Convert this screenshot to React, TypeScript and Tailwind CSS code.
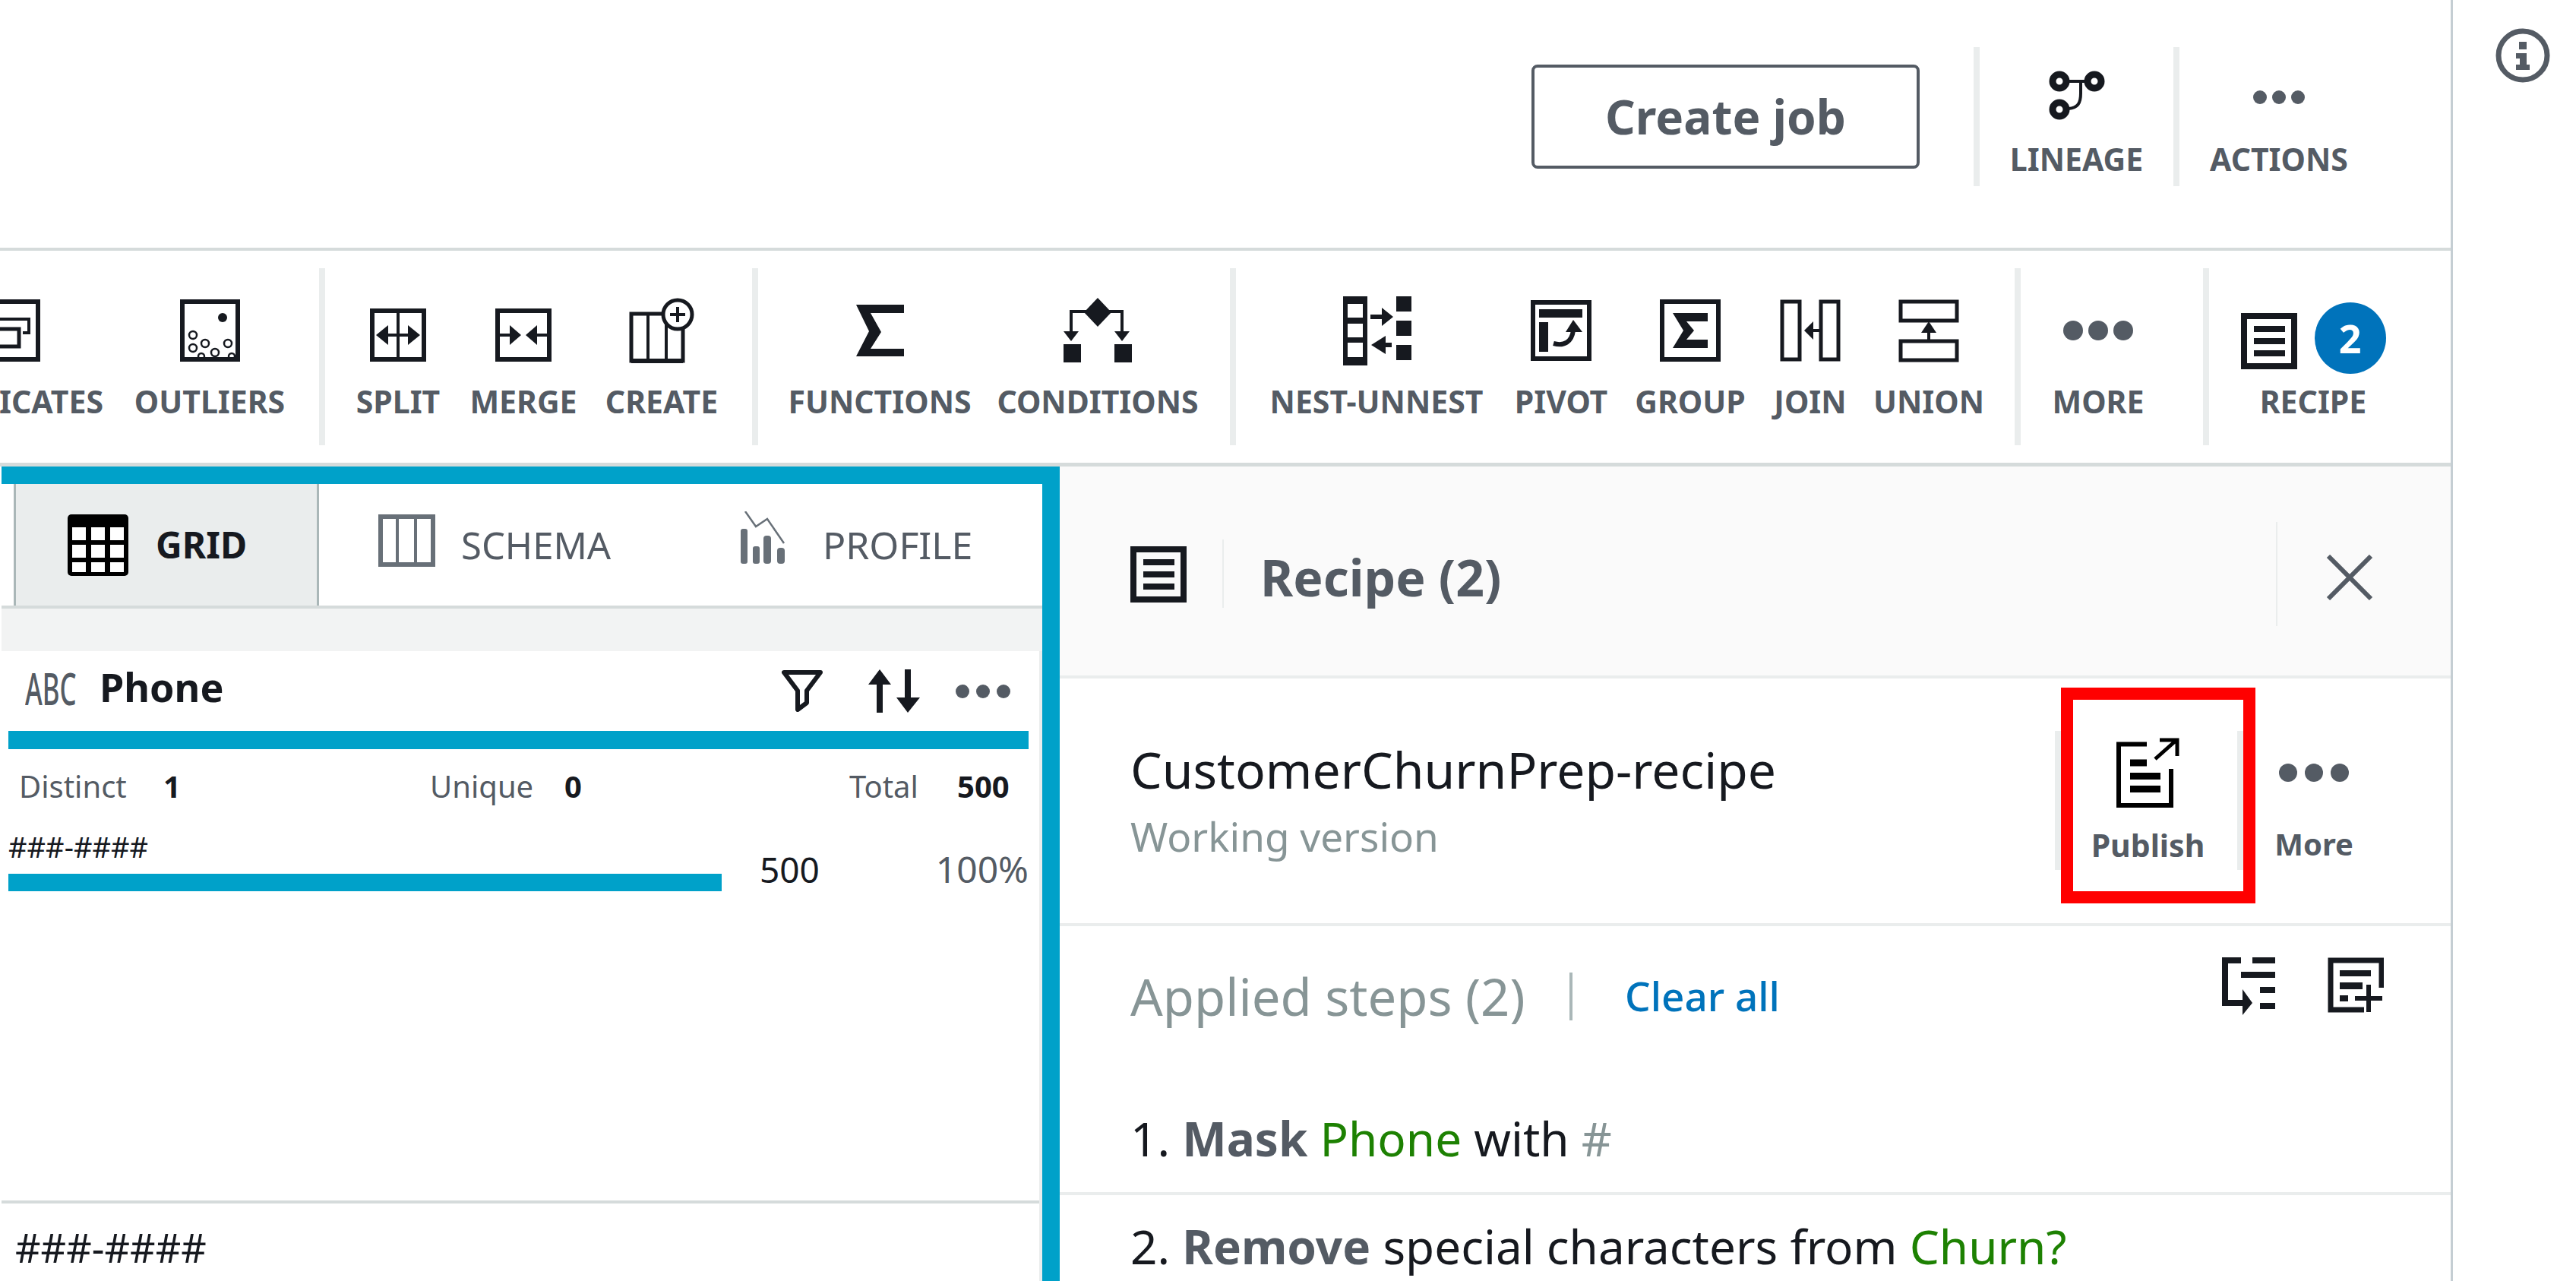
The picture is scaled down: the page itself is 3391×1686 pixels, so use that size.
import type { ReactNode } from "react";

function Dots({ r, gap, fill = "#545b64" }: { r: number; gap: number; fill?: string }) {
  const w = r * 2 + gap * 2;
  return (
    <svg width={w} height={r * 2} viewBox={`0 0 ${w} ${r * 2}`} className="block">
      <circle cx={r} cy={r} r={r} fill={fill} />
      <circle cx={r + gap} cy={r} r={r} fill={fill} />
      <circle cx={r + gap * 2} cy={r} r={r} fill={fill} />
    </svg>
  );
}

function RecipeIcon() {
  return (
    <svg width="74" height="74" viewBox="0 0 74 74" className="block shrink-0" fill="#16191f">
      <path d="M0 0H74V74H0Z M8 8V66H66V8Z" fillRule="evenodd" />
      <rect x="17" y="17" width="41" height="8" />
      <rect x="17" y="33" width="41" height="8" />
      <rect x="17" y="49" width="41" height="8" />
    </svg>
  );
}

function Tool({ label, width, children, dup }: { label: string; width: string; children: ReactNode; dup?: boolean }) {
  return (
    <div className={`${width} flex flex-col ${dup ? "items-start" : "items-center"} shrink-0`}>
      <div className="h-[100px] flex justify-center">{children}</div>
      <div className={`mt-[18px] h-[40px] leading-[40px] text-[41px] font-bold whitespace-nowrap text-[#545b64] ${dup ? "self-end pr-[4px]" : ""}`}>
        {label}
      </div>
    </div>
  );
}

function Sep({ className = "" }: { className?: string }) {
  return <div className={`w-[8px] h-[233px] bg-[#eaeded] shrink-0 ${className}`} />;
}

const INK = "#16191f";

export default function App() {
  return (
    <div className="w-[3391px] h-[1686px] overflow-hidden bg-white flex [font-family:'Noto_Sans',sans-serif] text-[#16191f]">
      <div className="w-[3229px] shrink-0 h-full border-r-[3px] border-[#c5ced3] flex flex-col">
        {/* top bar */}
        <div className="h-[326px] shrink-0 flex justify-end items-start pt-[62px] pr-[95px]">
          <button className="mt-[23px] w-[511px] h-[137px] border-[4px] border-[#545b64] rounded-[8px] text-[62px] font-bold text-[#545b64] bg-white">
            Create job
          </button>
          <div className="w-[8px] h-[183px] bg-[#eaeded] ml-[71px]" />
          <div className="w-[255px] h-[183px] flex flex-col items-center pt-[31px]">
            <svg width="74" height="65" viewBox="0 0 74 65" fill="none" stroke={INK} className="block">
              <circle cx="14" cy="14" r="9" strokeWidth="9" />
              <circle cx="60" cy="14" r="9" strokeWidth="9" />
              <circle cx="14" cy="51" r="9" strokeWidth="9" />
              <path d="M27 14H47" strokeWidth="4" />
              <path d="M42 14V30C42 43 38 49 26 50" strokeWidth="4" />
            </svg>
            <div className="mt-[31px] text-[41px] leading-[40px] font-bold text-[#545b64]">LINEAGE</div>
          </div>
          <div className="w-[8px] h-[183px] bg-[#eaeded]" />
          <div className="w-[262px] h-[183px] flex flex-col items-center pt-[57px]">
            <Dots r={9} gap={25} />
            <div className="mt-[52px] text-[41px] leading-[40px] font-bold text-[#545b64]">ACTIONS</div>
          </div>
        </div>
        <div className="h-[4px] shrink-0 bg-[#d5dbdb]" />

        {/* toolbar */}
        <div className="h-[279px] shrink-0 flex items-start pt-[23px] overflow-hidden">
          <div className="flex items-start">
            <div className="pt-[37px] flex">
              <Tool label="DUPLICATES" width="w-[140px]" dup>
                <svg width="53" height="100" viewBox="0 0 53 100" fill="none" stroke={INK} className="block">
                  <path d="M0 7H50V83H0" strokeWidth="6" />
                  <path d="M0 30H38V48H30" strokeWidth="4" />
                  <path d="M0 43H25V66H0" strokeWidth="5" />
                </svg>
              </Tool>
              <Tool label="OUTLIERS" width="w-[272px]">
                <svg width="79" height="100" viewBox="0 0 79 100" fill="none" stroke={INK} className="block">
                  <rect x="3" y="7" width="73" height="76" strokeWidth="6" />
                  <circle cx="56" cy="28" r="6" fill={INK} stroke="none" />
                  <g strokeWidth="2.5">
                    <circle cx="17" cy="51" r="5" />
                    <circle cx="33" cy="62" r="5" />
                    <circle cx="17" cy="68" r="5" />
                    <circle cx="63" cy="62" r="5" />
                    <circle cx="46" cy="74" r="5" />
                    <circle cx="28" cy="79" r="4" />
                    <circle cx="68" cy="79" r="4" />
                  </g>
                </svg>
              </Tool>
            </div>
            <Sep className="ml-[8px]" />
            <div className="pt-[37px] flex">
              <Tool label="SPLIT" width="w-[192px]">
                <svg width="74" height="100" viewBox="0 0 74 100" fill={INK} stroke="none" className="block">
                  <rect x="3" y="19" width="68" height="64" fill="none" stroke={INK} strokeWidth="6" />
                  <path d="M37 19V83" stroke={INK} strokeWidth="4" />
                  <path d="M8 51L24 38V64Z M66 51L50 38V64Z" />
                  <path d="M24 51H50" stroke={INK} strokeWidth="4" />
                </svg>
              </Tool>
              <Tool label="MERGE" width="w-[138px]">
                <svg width="74" height="100" viewBox="0 0 74 100" fill={INK} stroke="none" className="block">
                  <rect x="3" y="19" width="68" height="64" fill="none" stroke={INK} strokeWidth="6" />
                  <path d="M34 51L19 38V64Z M40 51L55 38V64Z" />
                  <path d="M3 51H20 M54 51H71" stroke={INK} strokeWidth="4" />
                </svg>
              </Tool>
              <Tool label="CREATE" width="w-[226px]">
                <svg width="86" height="100" viewBox="0 0 86 100" fill="none" stroke={INK} className="block">
                  <rect x="3" y="23" width="68" height="62" strokeWidth="5" />
                  <path d="M25 23V85 M49 23V85" strokeWidth="4" />
                  <path d="M3 85H71" strokeWidth="6" />
                  <circle cx="64" cy="24" r="19" fill="white" strokeWidth="5" />
                  <path d="M54 24H74 M64 14V34" strokeWidth="4" />
                </svg>
              </Tool>
            </div>
            <Sep className="ml-[6px]" />
            <div className="pt-[37px] flex">
              <Tool label="FUNCTIONS" width="w-[320px]">
                <svg width="63" height="100" viewBox="0 0 63 100" fill={INK} className="block">
                  <path d="M0 11H63V22H19L33 47L19 69H63V79H0L17 46Z" />
                </svg>
              </Tool>
              <Tool label="CONDITIONS" width="w-[254px]">
                <svg width="90" height="100" viewBox="0 0 90 100" fill={INK} className="block">
                  <path d="M45 2L63 21L45 40L27 21Z" />
                  <path d="M10 48V20H77V48" fill="none" stroke={INK} strokeWidth="4" />
                  <path d="M0 46H20L10 59Z M67 46H87L77 59Z" />
                  <rect x="0" y="63" width="23" height="24" />
                  <rect x="67" y="63" width="23" height="24" />
                </svg>
              </Tool>
            </div>
            <Sep className="ml-[47px]" />
            <div className="pt-[37px] flex">
              <Tool label="NEST-UNNEST" width="w-[370px]">
                <svg width="91" height="100" viewBox="0 0 91 100" fill={INK} className="block">
                  <path d="M1 0H33V91H1Z M7 10V28H27V10Z M7 36V54H27V36Z M7 61V80H27V61Z" fillRule="evenodd" />
                  <rect x="71" y="0" width="20" height="20" />
                  <rect x="71" y="32" width="20" height="20" />
                  <rect x="71" y="64" width="20" height="20" />
                  <path d="M37 24H52V15L67 27L52 39V30H37Z" />
                  <path d="M38 64L57 52V61H65V67H57V76Z" />
                </svg>
              </Tool>
              <Tool label="PIVOT" width="w-[116px]">
                <svg width="80" height="100" viewBox="0 0 80 100" fill={INK} className="block">
                  <rect x="3" y="8" width="74" height="74" fill="none" stroke={INK} strokeWidth="6" />
                  <rect x="11" y="17" width="57" height="11" />
                  <rect x="11" y="34" width="12" height="39" />
                  <path d="M30 62C44 66 54 60 56 45" fill="none" stroke={INK} strokeWidth="6" />
                  <path d="M56 31L68 47H46Z" />
                </svg>
              </Tool>
              <Tool label="GROUP" width="w-[224px]">
                <svg width="80" height="100" viewBox="0 0 80 100" fill={INK} className="block">
                  <rect x="3" y="7" width="74" height="76" fill="none" stroke={INK} strokeWidth="6" />
                  <path d="M17 22H63V33H35L45 45L35 57H63V68H17L31 45Z" />
                </svg>
              </Tool>
              <Tool label="JOIN" width="w-[92px]">
                <svg width="80" height="100" viewBox="0 0 80 100" fill={INK} className="block">
                  <rect x="3" y="7" width="23" height="76" fill="none" stroke={INK} strokeWidth="5" />
                  <rect x="54" y="7" width="23" height="76" fill="none" stroke={INK} strokeWidth="5" />
                  <path d="M32 45L44 33V57Z" />
                  <path d="M44 45H54" stroke={INK} strokeWidth="4" />
                </svg>
              </Tool>
              <Tool label="UNION" width="w-[220px]">
                <svg width="80" height="100" viewBox="0 0 80 100" fill={INK} className="block">
                  <rect x="3" y="7" width="74" height="25" fill="none" stroke={INK} strokeWidth="5" />
                  <rect x="3" y="59" width="74" height="25" fill="none" stroke={INK} strokeWidth="5" />
                  <path d="M40 33L50 48H30Z" />
                  <path d="M40 46V58" stroke={INK} strokeWidth="4" />
                </svg>
              </Tool>
            </div>
            <Sep className="ml-[3px]" />
            <div className="pt-[37px] flex">
              <Tool label="MORE" width="w-[204px]">
                <div className="pt-[32px]">
                  <Dots r={13} gap={33} />
                </div>
              </Tool>
            </div>
            <Sep className="ml-[36px]" />
            <div className="pt-[37px] flex">
              <Tool label="RECIPE" width="w-[274px]">
                <div className="flex items-start gap-[23px]">
                  <div className="pt-[22px]">
                    <RecipeIcon />
                  </div>
                  <div className="mt-[8px] w-[94px] h-[94px] rounded-full bg-[#0073bb] flex items-center justify-center text-white text-[52px] font-bold">
                    2
                  </div>
                </div>
              </Tool>
            </div>
          </div>
        </div>
        <div className="h-[5px] shrink-0 bg-[#d5dbdb]" />

        {/* body */}
        <div className="flex-1 flex min-h-0">
          {/* grid pane with teal selection frame */}
          <div className="ml-[2px] w-[1393px] shrink-0 border-t-[23px] border-r-[23px] border-[#00a1c9] flex flex-col">
            <div className="h-[160px] shrink-0 flex pl-[16px]">
              <div className="w-[402px] border-x-[3px] border-[#aab7b8] bg-[#eaeded] flex items-start pl-[68px] pt-[40px] shrink-0">
                <svg width="80" height="81" viewBox="0 0 80 81" className="block">
                  <rect width="80" height="81" rx="5" fill="#000" />
                  <g fill="white">
                    <rect x="6" y="17" width="18" height="17" />
                    <rect x="31" y="17" width="18" height="17" />
                    <rect x="56" y="17" width="18" height="17" />
                    <rect x="6" y="40" width="18" height="17" />
                    <rect x="31" y="40" width="18" height="17" />
                    <rect x="56" y="40" width="18" height="17" />
                    <rect x="6" y="63" width="18" height="13" />
                    <rect x="31" y="63" width="18" height="13" />
                    <rect x="56" y="63" width="18" height="13" />
                  </g>
                </svg>
                <span className="ml-[36px] mt-[16px] text-[48px] leading-[48px] font-bold">GRID</span>
              </div>
              <div className="pl-[78px] pt-[39px] flex items-start w-[555px] shrink-0">
                <svg width="75" height="70" viewBox="0 0 75 70" fill="none" stroke="#687078" className="block shrink-0">
                  <rect x="3" y="4" width="69" height="63" strokeWidth="6" />
                  <path d="M25 4V67 M49 4V67" strokeWidth="4" />
                </svg>
                <span className="ml-[34px] mt-[17px] text-[49px] leading-[48px] text-[#545b64]">SCHEMA</span>
              </div>
              <div className="pt-[36px] flex items-start">
                <svg width="61" height="69" viewBox="0 0 61 69" className="block shrink-0" fill="#687078">
                  <rect x="0" y="23" width="9" height="46" rx="3" />
                  <rect x="16" y="46" width="9" height="23" rx="3" />
                  <rect x="30" y="32" width="10" height="37" rx="4" />
                  <rect x="48" y="48" width="10" height="21" rx="4" />
                  <path d="M6 0L20 20L35 10L57 42" fill="none" stroke="#687078" strokeWidth="2.5" />
                </svg>
                <span className="ml-[47px] mt-[20px] text-[50px] leading-[48px] text-[#545b64]">PROFILE</span>
              </div>
            </div>
            <div className="h-[4px] shrink-0 bg-[#d5dbdb]" />
            <div className="h-[56px] shrink-0 bg-[#f2f3f3]" />

            {/* column card */}
            <div className="flex-1 border-r-[4px] border-[#eaeded] flex flex-col min-h-0">
              <div className="h-[105px] shrink-0 flex items-center pl-[31px] pr-[38px]">
                <span className="w-[98px] -mt-[8px] text-[58px] leading-[58px] font-medium text-[#545b64] origin-left scale-x-[0.6]">ABC</span>
                <span className="-mt-[12px] text-[52px] leading-[58px] font-bold">Phone</span>
                <div className="ml-auto flex items-center">
                  <svg width="54" height="55" viewBox="0 0 54 55" fill="none" stroke={INK} strokeWidth="6" strokeLinejoin="round" className="block">
                    <path d="M3 3H51L33 27V43L21 52V27Z" />
                  </svg>
                  <svg width="69" height="57" viewBox="0 0 69 57" fill={INK} className="block ml-[59px]">
                    <path d="M16 0L31 20H1Z M38 37H69L53 57Z" />
                    <path d="M16 18V57 M53 0V40" stroke={INK} strokeWidth="8" />
                  </svg>
                  <div className="ml-[47px]">
                    <Dots r={9} gap={27} />
                  </div>
                </div>
              </div>
              <div className="h-[24px] shrink-0 ml-[9px] w-[1343px] bg-[#00a1c9]" />
              <div className="mt-[26px] flex items-center h-[46px] text-[40px] leading-[46px] shrink-0">
                <div className="w-[564px] pl-[23px] flex shrink-0">
                  <span className="text-[#545b64] w-[190px]">Distinct</span>
                  <span className="font-bold">1</span>
                </div>
                <div className="w-[552px] flex shrink-0">
                  <span className="text-[#545b64] w-[177px]">Unique</span>
                  <span className="font-bold">0</span>
                </div>
                <div className="flex">
                  <span className="text-[#545b64] w-[142px]">Total</span>
                  <span className="font-bold">500</span>
                </div>
              </div>
              <div className="flex items-start pl-[9px] mt-[32px] shrink-0">
                <div className="w-[939px] shrink-0">
                  <div className="h-[60px] leading-[48px] text-[38px]">###-####</div>
                  <div className="h-[23px] bg-[#00a1c9]" />
                </div>
                <div className="ml-[50px] w-[78px] mt-[26px] text-[46px] leading-[56px]">500</div>
                <div className="w-[276px] text-right mt-[26px] text-[48px] leading-[56px] text-[#545b64]">100%</div>
              </div>
              <div className="mt-[407px] h-[4px] shrink-0 bg-[#d5dbdb]" />
              <div className="pl-[18px] pt-[28px] text-[52px] leading-[60px] whitespace-nowrap">###-####</div>
            </div>
          </div>

          {/* recipe panel */}
          <div className="flex-1 min-w-0 flex flex-col">
            <div className="h-[275px] shrink-0 bg-[#fafafa] flex items-start pl-[93px]">
              <div className="pt-[105px] flex items-start">
                <RecipeIcon />
                <div className="ml-[47px] -mt-[9px] w-[2px] h-[90px] bg-[#eaeded]" />
                <div className="ml-[48px] mt-[2px] text-[66px] leading-[76px] font-bold text-[#545b64]">Recipe (2)</div>
              </div>
              <div className="ml-auto mt-[73px] w-[2px] h-[137px] bg-[#eaeded]" />
              <svg width="62" height="60" viewBox="0 0 62 60" fill="none" stroke="#545b64" strokeWidth="6" className="block mt-[116px] ml-[64px] mr-[102px]">
                <path d="M3 2L59 58 M59 2L3 58" />
              </svg>
            </div>
            <div className="h-[4px] shrink-0 bg-[#eaeded]" />

            <div className="h-[322px] shrink-0 flex items-start pl-[93px] pr-[87px]">
              <div className="pt-[79px]">
                <div className="text-[66px] leading-[80px] whitespace-nowrap">CustomerChurnPrep-recipe</div>
                <div className="mt-[17px] text-[53px] leading-[64px] text-[#879596]">Working version</div>
              </div>
              <div className="ml-auto mt-[69px] relative w-[248px] h-[183px] border-x-[8px] border-[#eaeded] flex flex-col items-center shrink-0">
                <svg width="84" height="92" viewBox="0 0 84 92" fill="none" stroke="#000" className="block mt-[9px] -ml-[3px]">
                  <path d="M40 8.5H3V89H72V41" strokeWidth="6" />
                  <path d="M18 33H40 M18 50.5H58 M18 67.5H58" strokeWidth="9" />
                  <path d="M51 28L78 4 M57 3H80V24" strokeWidth="5" />
                </svg>
                <div className="mt-[27px] -ml-[3px] text-[41px] leading-[44px] font-bold text-[#545b64]">Publish</div>
                <div className="absolute -top-[57px] left-0 w-[256px] h-[284px] border-[16px] border-[#ff0000]" />
              </div>
              <div className="mt-[69px] w-[186px] h-[183px] flex flex-col items-center shrink-0">
                <div className="mt-[43px]">
                  <Dots r={12} gap={34} />
                </div>
                <div className="mt-[60px] text-[40px] leading-[44px] font-bold text-[#545b64]">More</div>
              </div>
            </div>
            <div className="h-[4px] shrink-0 bg-[#eaeded]" />

            <div className="h-[243px] shrink-0 flex items-start pl-[93px] pr-[88px]">
              <div className="mt-[56px] flex items-center">
                <span className="w-[524px] text-[67px] leading-[72px] whitespace-nowrap text-[#879596]">Applied steps (2)</span>
                <div className="ml-[54px] w-[4px] h-[63px] bg-[#aab7b8]" />
                <span className="ml-[69px] text-[53px] leading-[72px] font-medium text-[#0073bb]">Clear all</span>
              </div>
              <svg width="70" height="76" viewBox="0 0 70 76" fill={INK} className="block ml-auto mt-[41px]">
                <path d="M25 4H4V60H30" fill="none" stroke={INK} strokeWidth="8" />
                <path d="M27 42L40 60L27 76Z" />
                <rect x="40" y="0" width="30" height="8" />
                <rect x="25" y="19" width="45" height="8" />
                <rect x="50" y="39" width="20" height="8" />
                <rect x="50" y="60" width="20" height="8" />
              </svg>
              <svg width="74" height="73" viewBox="0 0 74 73" fill={INK} className="block ml-[69px] mt-[41px]">
                <path d="M71 40V4H4V69H48" fill="none" stroke={INK} strokeWidth="7" />
                <rect x="16" y="17" width="41" height="8" />
                <rect x="16" y="33" width="30" height="9" />
                <rect x="16" y="50" width="11" height="8" />
                <path d="M36 54H72 M54 36V72" stroke={INK} strokeWidth="6" />
              </svg>
            </div>
            <div className="h-[107px] shrink-0 pl-[93px] text-[62px] leading-[72px] whitespace-nowrap">
              1. <b className="font-bold text-[#545b64]">Mask</b> <span className="text-[#1d8102]">Phone</span> with <span className="text-[#879596]">#</span>
            </div>
            <div className="h-[4px] shrink-0 bg-[#eaeded]" />
            <div className="pt-[31px] pl-[93px] text-[62px] leading-[72px] whitespace-nowrap">
              2. <b className="font-bold text-[#545b64]">Remove</b> special characters from <span className="text-[#1d8102]">Churn?</span>
            </div>
          </div>
        </div>
      </div>

      {/* info rail */}
      <div className="flex-1 pt-[37px] pl-[56px]">
        <svg width="72" height="72" viewBox="0 0 72 72" className="block">
          <circle cx="36" cy="36" r="32" fill="none" stroke="#545b64" strokeWidth="7" />
          <rect x="31" y="18" width="10" height="10" fill="#545b64" />
          <path d="M27 33H41V48H45V55H27V48H32V40H27Z" fill="#545b64" />
        </svg>
      </div>
    </div>
  );
}
